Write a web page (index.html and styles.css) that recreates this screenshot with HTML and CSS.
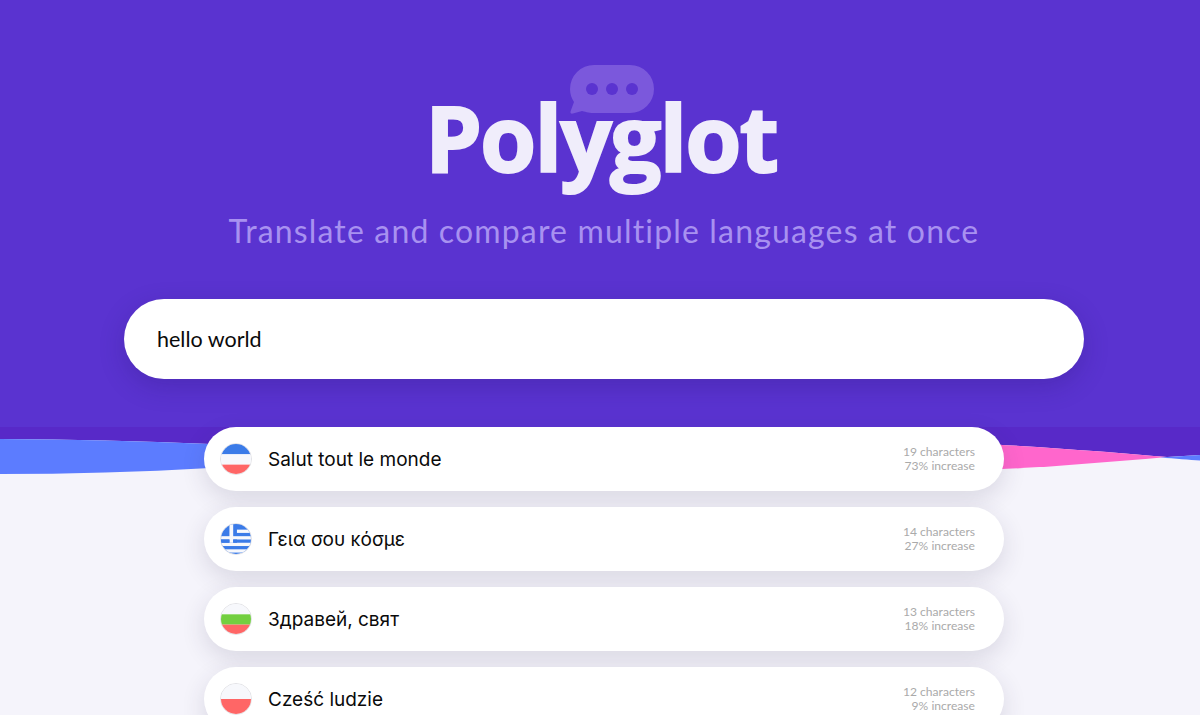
FILE: index.html
```html
<!doctype html>
<html lang="en">
  <head>
    <meta charset="UTF-8" />
    <title>Polyglot</title>
    <link rel="stylesheet" href="styles.css">
  </head>
  <body>
    <div id="app">
      <header class="hero">
        <div class="logo">
          <svg class="bubble" width="84" height="50" viewBox="0 0 84 50">
            <path d="M24 0H60A24 24 0 0 1 60 48H23C19 48 14 46.500 12 46L3 48.500C1 49 0 48 .6 46.200L4 37C1.500 33 0 29 0 24A24 24 0 0 1 24 0Z" fill="#7b58dc" />
            <circle cx="22" cy="24" r="6" fill="#5a33d0" />
            <circle cx="42" cy="24" r="6" fill="#5a33d0" />
            <circle cx="62" cy="24" r="6" fill="#5a33d0" />
          </svg>
          <h1>Polyglot</h1>
        </div>
        <p class="tagline">Translate and compare multiple languages at once</p>
        <div class="search">hello world</div>
      </header>

      <svg class="wave" width="1200" height="60" viewBox="0 0 1200 60">
        <path d="M0 0H1200V28L1167 30C1120 26 1060 21 995 17.500L210 17C140 14 70 12.500 0 12Z" fill="#5829c8" />
        <path d="M0 12C70 12.500 140 14 210 17V41C140 45 70 47 0 47Z" fill="#5c7cff" />
        <path d="M995 17.500C1060 21 1120 26 1167 30C1110 35 1050 40 995 42.500Z" fill="#ff66cc" />
        <path d="M1160 30.500L1200 28V33.500C1190 33 1175 31.500 1160 30.500Z" fill="#5c7cff" />
      </svg>

      <div class="results">
        <div class="result">
          <svg class="flag" viewBox="0 0 32 32">
            <rect width="32" height="11" fill="#3b7be8" />
            <rect y="11" width="32" height="11" fill="#f7f8fc" />
            <rect y="22" width="32" height="10" fill="#ff6666" />
          </svg>
          <span class="phrase">Salut tout le monde</span>
          <div class="meta">19 characters<br />73% increase</div>
        </div>
        <div class="result">
          <svg class="flag" viewBox="0 0 32 32">
            <rect width="32" height="32" fill="#3b7be8" />
            <rect x="17" y="6" width="15" height="3.500" fill="#f7f8fc" />
            <rect y="13" width="32" height="3.500" fill="#f7f8fc" />
            <rect y="20" width="32" height="3.500" fill="#f7f8fc" />
            <rect y="27" width="32" height="3.500" fill="#f7f8fc" />
            <rect x="9" width="4" height="20" fill="#f7f8fc" />
            <rect x="13" y="16.500" width="4" height="3.500" fill="#3b7be8" />
            <rect x="0" y="16.500" width="9" height="3.500" fill="#3b7be8" />
          </svg>
          <span class="phrase">Γεια σου κόσμε</span>
          <div class="meta">14 characters<br />27% increase</div>
        </div>
        <div class="result">
          <svg class="flag" viewBox="0 0 32 32">
            <rect width="32" height="11" fill="#f7f8fc" />
            <rect y="11" width="32" height="11" fill="#72cf40" />
            <rect y="22" width="32" height="10" fill="#ff6666" />
          </svg>
          <span class="phrase">Здравей, свят</span>
          <div class="meta">13 characters<br />18% increase</div>
        </div>
        <div class="result">
          <svg class="flag" viewBox="0 0 32 32">
            <rect width="32" height="16" fill="#f7f8fc" />
            <rect y="16" width="32" height="16" fill="#ff6666" />
          </svg>
          <span class="phrase">Cześć ludzie</span>
          <div class="meta">12 characters<br />9% increase</div>
        </div>
      </div>
    </div>
  </body>
</html>
```

FILE: styles.css
```css
* {
  box-sizing: border-box;
  padding: 0;
  margin: 0;
}

html,
body {
  height: 100%;
  overflow: hidden;
}

body {
  font-family: Inter, "Liberation Sans", sans-serif;
  background: #f5f4fb;
}

#app {
  position: relative;
  height: 100vh;
  overflow: hidden;
}

.hero {
  display: flex;
  flex-direction: column;
  align-items: center;
  height: 427px;
  padding-top: 79px;
  padding-left: 8px;
  background: #5a33d0;
}

.logo {
  position: relative;
  margin-right: 6px;
}

.logo h1 {
  position: relative;
  font-family: "Open Sans", "Liberation Sans", sans-serif;
  font-size: 91px;
  font-weight: 700;
  line-height: 116px;
  letter-spacing: -2px;
  color: #f0edfb;
  -webkit-text-stroke: 2px #f0edfb;
}

.bubble {
  position: absolute;
  top: -14px;
  left: 50%;
  margin-left: -31px;
}

.tagline {
  margin-top: 16px;
  font-family: Lato, "Liberation Sans", sans-serif;
  font-size: 32px;
  line-height: 40px;
  letter-spacing: 1.160px;
  color: #a891f0;
}

.search {
  width: 960px;
  height: 80px;
  padding-left: 33px;
  margin-top: 48px;
  font-family: Lato, "Liberation Sans", sans-serif;
  font-size: 21.500px;
  line-height: 80px;
  color: #0a0a0a;
  background: #fff;
  border-radius: 40px;
  box-shadow: 0 8px 24px rgba(40, 20, 110, 0.25);
}

.wave {
  position: absolute;
  top: 427px;
  left: 0;
  display: block;
}

.results {
  position: relative;
  display: flex;
  flex-direction: column;
  gap: 16px;
  width: 800px;
  margin-left: 204px;
}

.result {
  display: flex;
  flex-shrink: 0;
  align-items: center;
  height: 64px;
  padding: 0 29px 0 16px;
  background: #fff;
  border-radius: 32px;
  box-shadow: 0 8px 24px rgba(50, 45, 80, 0.14);
}

.flag {
  flex-shrink: 0;
  width: 32px;
  height: 32px;
  border: 1px solid #e2e2e6;
  border-radius: 50%;
}

.phrase {
  margin-left: 16px;
  font-size: 19px;
  color: #0a0a0a;
}

.meta {
  margin-left: auto;
  font-family: Lato, "Liberation Sans", sans-serif;
  font-size: 12.100px;
  line-height: 14px;
  color: #aaa;
  text-align: right;
}
```
